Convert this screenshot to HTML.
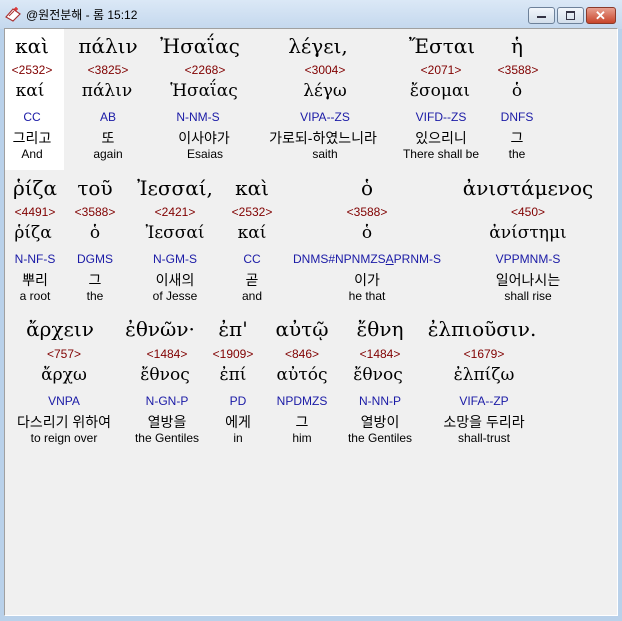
<!DOCTYPE html>
<html><head><meta charset="utf-8"><style>
body{margin:0;width:622px;height:621px;background:#b9d1ea;position:relative;overflow:hidden;font-family:"Liberation Sans","Noto Sans CJK KR",sans-serif}
.title{position:absolute;left:0;top:0;width:622px;height:29px;background:linear-gradient(#dbe8f6,#c4d8ee)}
.tt{position:absolute;left:26px;top:6px;font-size:12px;color:#000}
.client{position:absolute;left:4px;top:28px;width:612px;height:586px;background:#f0f0f0;border:1px solid #fff;border-top-color:#a0a0a0;border-left-color:#a0a0a0}
.hl{position:absolute;left:5px;top:29px;width:59px;height:141px;background:#fff}
.c{position:absolute;transform:translateX(-50%);white-space:nowrap;text-align:center}
.g{font-family:"DejaVu Serif","Liberation Serif",serif;font-size:20px;color:#000;font-weight:300}
.s{font-size:12px;color:#800000}
.l{font-family:"DejaVu Serif","Liberation Serif",serif;font-size:17px;color:#000}
.m{font-size:12px;color:#1a1aa6}
.k{font-size:14px;color:#000}
.e{font-size:12px;color:#000}
.btn{position:absolute;top:7px;width:25px;height:15px;border:1px solid #6d8199;border-radius:3px;background:linear-gradient(#f2f6fb,#d3deea)}
</style></head><body>
<div class="title"></div>
<svg style="position:absolute;left:4px;top:5px" width="18" height="18" viewBox="0 0 18 18"><path d="M2 12 L9 4 L16 9 L9 16 Z" fill="#fff" stroke="#a33" stroke-width="1.2"/><path d="M5 11 L10 6" stroke="#a33"/><path d="M12 2 L12 6 M10 4 L14 4" stroke="#d22" stroke-width="1.3"/></svg>
<div class="tt">@원전분해 - 롬 15:12</div>
<div class="btn" style="left:528px"><div style="position:absolute;left:8px;top:8px;width:9px;height:2px;background:#334"></div></div>
<div class="btn" style="left:557px"><div style="position:absolute;left:8px;top:3px;width:7px;height:6px;border:1px solid #334;border-top-width:2px"></div></div>
<div class="btn" style="left:586px;width:28px;background:linear-gradient(#e8a090,#c8452a);border-color:#8a3a2a"><div style="position:absolute;left:8px;top:0;color:#fff;font-weight:bold;font-size:13px">✕</div></div>
<div class="client"></div>
<div class="hl"></div>

<div class="c g" style="left:32px;top:34px">καὶ</div>
<div class="c g" style="left:108px;top:34px">πάλιν</div>
<div class="c g" style="left:200px;top:34px">Ἠσαΐας</div>
<div class="c g" style="left:318px;top:34px">λέγει,</div>
<div class="c g" style="left:442px;top:34px">Ἔσται</div>
<div class="c g" style="left:517px;top:34px">ἡ</div>
<div class="c s" style="left:32px;top:63px">&lt;2532&gt;</div>
<div class="c s" style="left:108px;top:63px">&lt;3825&gt;</div>
<div class="c s" style="left:205px;top:63px">&lt;2268&gt;</div>
<div class="c s" style="left:325px;top:63px">&lt;3004&gt;</div>
<div class="c s" style="left:441px;top:63px">&lt;2071&gt;</div>
<div class="c s" style="left:518px;top:63px">&lt;3588&gt;</div>
<div class="c l" style="left:30px;top:81px">καί</div>
<div class="c l" style="left:107px;top:81px">πάλιν</div>
<div class="c l" style="left:204px;top:81px">Ἡσαΐας</div>
<div class="c l" style="left:325px;top:81px">λέγω</div>
<div class="c l" style="left:440px;top:81px">ἔσομαι</div>
<div class="c l" style="left:517px;top:81px">ὁ</div>
<div class="c m" style="left:32px;top:110px">CC</div>
<div class="c m" style="left:108px;top:110px">AB</div>
<div class="c m" style="left:198px;top:110px">N-NM-S</div>
<div class="c m" style="left:325px;top:110px">VIPA--ZS</div>
<div class="c m" style="left:441px;top:110px">VIFD--ZS</div>
<div class="c m" style="left:517px;top:110px">DNFS</div>
<div class="c k" style="left:32px;top:128px">그리고</div>
<div class="c k" style="left:108px;top:128px">또</div>
<div class="c k" style="left:204px;top:128px">이사야가</div>
<div class="c k" style="left:323px;top:128px">가로되-하였느니라</div>
<div class="c k" style="left:441px;top:128px">있으리니</div>
<div class="c k" style="left:517px;top:128px">그</div>
<div class="c e" style="left:32px;top:147px">And</div>
<div class="c e" style="left:108px;top:147px">again</div>
<div class="c e" style="left:205px;top:147px">Esaias</div>
<div class="c e" style="left:325px;top:147px">saith</div>
<div class="c e" style="left:441px;top:147px">There shall be</div>
<div class="c e" style="left:517px;top:147px">the</div>

<div class="c g" style="left:35px;top:176px">ῥίζα</div>
<div class="c g" style="left:95px;top:176px">τοῦ</div>
<div class="c g" style="left:175px;top:176px">Ἰεσσαί,</div>
<div class="c g" style="left:252px;top:176px">καὶ</div>
<div class="c g" style="left:367px;top:176px">ὁ</div>
<div class="c g" style="left:528px;top:176px">ἀνιστάμενος</div>
<div class="c s" style="left:35px;top:205px">&lt;4491&gt;</div>
<div class="c s" style="left:95px;top:205px">&lt;3588&gt;</div>
<div class="c s" style="left:175px;top:205px">&lt;2421&gt;</div>
<div class="c s" style="left:252px;top:205px">&lt;2532&gt;</div>
<div class="c s" style="left:367px;top:205px">&lt;3588&gt;</div>
<div class="c s" style="left:528px;top:205px">&lt;450&gt;</div>
<div class="c l" style="left:33px;top:223px">ῥίζα</div>
<div class="c l" style="left:95px;top:223px">ὁ</div>
<div class="c l" style="left:175px;top:223px">Ἰεσσαί</div>
<div class="c l" style="left:252px;top:223px">καί</div>
<div class="c l" style="left:367px;top:223px">ὁ</div>
<div class="c l" style="left:528px;top:223px">ἀνίστημι</div>
<div class="c m" style="left:35px;top:252px">N-NF-S</div>
<div class="c m" style="left:95px;top:252px">DGMS</div>
<div class="c m" style="left:175px;top:252px">N-GM-S</div>
<div class="c m" style="left:252px;top:252px">CC</div>
<div class="c m" style="left:367px;top:252px">DNMS#NPNMZS<u>A</u>PRNM-S</div>
<div class="c m" style="left:528px;top:252px">VPPMNM-S</div>
<div class="c k" style="left:35px;top:270px">뿌리</div>
<div class="c k" style="left:95px;top:270px">그</div>
<div class="c k" style="left:175px;top:270px">이새의</div>
<div class="c k" style="left:252px;top:270px">곧</div>
<div class="c k" style="left:367px;top:270px">이가</div>
<div class="c k" style="left:528px;top:270px">일어나시는</div>
<div class="c e" style="left:35px;top:289px">a root</div>
<div class="c e" style="left:95px;top:289px">the</div>
<div class="c e" style="left:175px;top:289px">of Jesse</div>
<div class="c e" style="left:252px;top:289px">and</div>
<div class="c e" style="left:367px;top:289px">he that</div>
<div class="c e" style="left:528px;top:289px">shall rise</div>

<div class="c g" style="left:60px;top:317px">ἄρχειν</div>
<div class="c g" style="left:160px;top:317px">ἐθνῶν·</div>
<div class="c g" style="left:233px;top:317px">ἐπ'</div>
<div class="c g" style="left:302px;top:317px">αὐτῷ</div>
<div class="c g" style="left:380px;top:317px">ἔθνη</div>
<div class="c g" style="left:482px;top:317px">ἐλπιοῦσιν.</div>
<div class="c s" style="left:64px;top:347px">&lt;757&gt;</div>
<div class="c s" style="left:167px;top:347px">&lt;1484&gt;</div>
<div class="c s" style="left:233px;top:347px">&lt;1909&gt;</div>
<div class="c s" style="left:302px;top:347px">&lt;846&gt;</div>
<div class="c s" style="left:380px;top:347px">&lt;1484&gt;</div>
<div class="c s" style="left:484px;top:347px">&lt;1679&gt;</div>
<div class="c l" style="left:64px;top:365px">ἄρχω</div>
<div class="c l" style="left:165px;top:365px">ἔθνος</div>
<div class="c l" style="left:233px;top:365px">ἐπί</div>
<div class="c l" style="left:302px;top:365px">αὐτός</div>
<div class="c l" style="left:378px;top:365px">ἔθνος</div>
<div class="c l" style="left:484px;top:365px">ἐλπίζω</div>
<div class="c m" style="left:64px;top:394px">VNPA</div>
<div class="c m" style="left:167px;top:394px">N-GN-P</div>
<div class="c m" style="left:238px;top:394px">PD</div>
<div class="c m" style="left:302px;top:394px">NPDMZS</div>
<div class="c m" style="left:380px;top:394px">N-NN-P</div>
<div class="c m" style="left:484px;top:394px">VIFA--ZP</div>
<div class="c k" style="left:64px;top:412px">다스리기 위하여</div>
<div class="c k" style="left:167px;top:412px">열방을</div>
<div class="c k" style="left:238px;top:412px">에게</div>
<div class="c k" style="left:302px;top:412px">그</div>
<div class="c k" style="left:380px;top:412px">열방이</div>
<div class="c k" style="left:484px;top:412px">소망을 두리라</div>
<div class="c e" style="left:64px;top:431px">to reign over</div>
<div class="c e" style="left:167px;top:431px">the Gentiles</div>
<div class="c e" style="left:238px;top:431px">in</div>
<div class="c e" style="left:302px;top:431px">him</div>
<div class="c e" style="left:380px;top:431px">the Gentiles</div>
<div class="c e" style="left:484px;top:431px">shall-trust</div>
</body></html>
